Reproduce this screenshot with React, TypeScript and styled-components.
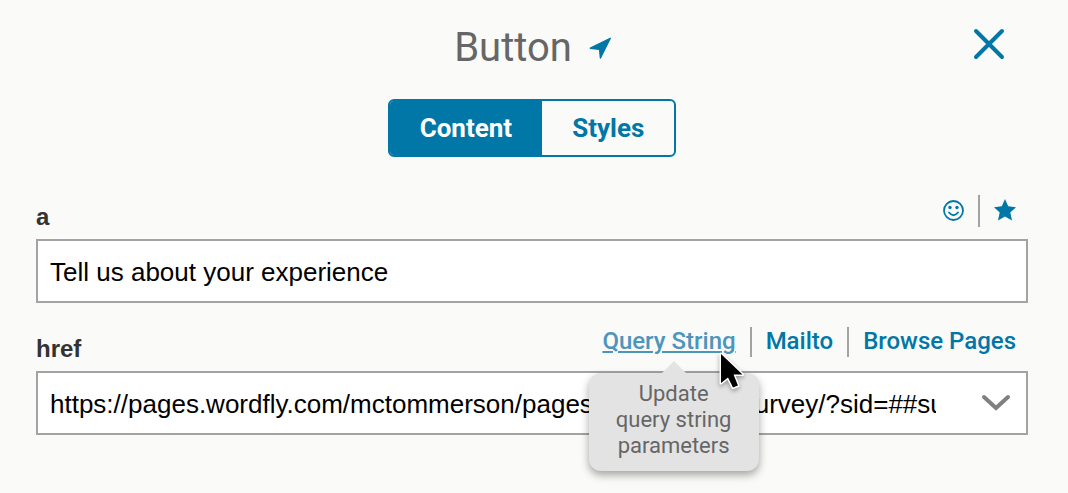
import React from "react";
import styled, { createGlobalStyle } from "styled-components";

const blue = "#0077a6";
const grey = "#a3a3a3";

const GlobalStyle = createGlobalStyle`
  *, *::before, *::after { box-sizing: border-box; }
  body { margin: 0; background: #fafaf8; font-family: Roboto, "Liberation Sans", sans-serif; }
  svg { display: block; }
`;

const Panel = styled.main`
  padding: 20px 40px 56px 36px;
`;

const Header = styled.header`
  display: grid;
  grid-template-columns: 1fr auto 1fr;
  align-items: center;
  height: 56px;
`;

const Heading = styled.div`
  grid-column: 2;
  display: flex;
  align-items: center;
  gap: 16px;
  padding-left: 2px;
`;

const Title = styled.h1`
  margin: 0;
  font-size: 40px;
  line-height: 48px;
  font-weight: 400;
  color: #666;
`;

const IconButton = styled.button`
  display: block;
  padding: 0;
  border: 0;
  background: none;
  color: ${blue};
  cursor: pointer;
`;

const CloseButton = styled(IconButton)`
  justify-self: end;
  align-self: start;
  margin: 8px 23px 0 0;
`;

const Tabs = styled.div`
  display: flex;
  width: fit-content;
  margin: 23px auto 38px;
  border: 2px solid ${blue};
  border-radius: 6px;
  overflow: hidden;
`;

const Tab = styled.button<{ $active?: boolean }>`
  height: 54px;
  padding: 0 30px;
  border: 0;
  font: 700 26px/32px Roboto, sans-serif;
  color: ${(p) => (p.$active ? "#fff" : blue)};
  background: ${(p) => (p.$active ? blue : "transparent")};
  cursor: pointer;
`;

const Field = styled.div`
  margin-bottom: 24px;
`;

const FieldHead = styled.div`
  display: flex;
  justify-content: space-between;
  align-items: flex-end;
  height: 32px;
  margin-bottom: 12px;
  padding-right: 12px;
`;

const Label = styled.label`
  font: 700 24px/20px "Liberation Sans", Arial, sans-serif;
  color: #333;
`;

const Actions = styled.div`
  display: flex;
  align-self: flex-start;
`;

const Action = styled.div<{ $tall?: boolean }>`
  position: relative;
  display: flex;
  align-items: ${(p) => (p.$tall ? "center" : "flex-start")};
  height: ${(p) => (p.$tall ? 32 : 30)}px;
  padding: 0 14px ${(p) => (p.$tall ? 2 : 0)}px;
  & + & { border-left: 2px solid ${grey}; }
  &:last-child { padding-right: 0; }
`;

const ActionLink = styled.a<{ $hover?: boolean }>`
  font-size: 24px;
  line-height: 28px;
  font-weight: 500;
  color: ${(p) => (p.$hover ? "#4c95bc" : blue)};
  text-decoration: ${(p) => (p.$hover ? "underline" : "none")};
  text-decoration-thickness: 2px;
  text-underline-offset: 2px;
  text-decoration-skip-ink: ${(p) => (p.$hover ? "auto" : "none")};
`;

const Tooltip = styled.div`
  position: absolute;
  z-index: 1;
  top: 46px;
  right: -9px;
  width: 170px;
  padding: 8px 24px 12px;
  border-radius: 12px;
  background: #e3e3e3;
  box-shadow: 0 4px 8px rgba(0, 0, 0, 0.35);
  font-size: 22px;
  line-height: 26px;
  text-align: center;
  color: #666;

  &::before {
    content: "";
    position: absolute;
    left: 73px;
    bottom: 100%;
    border: 12px solid transparent;
    border-top-width: 0;
    border-bottom-color: #e3e3e3;
  }
`;

const Pointer = styled.svg`
  position: absolute;
  z-index: 2;
  top: 22px;
  right: 4px;
  filter: drop-shadow(0 2px 2px rgba(0, 0, 0, 0.35));
`;

const Control = styled.div`
  display: flex;
  height: 64px;
  border: 2px solid ${grey};
  background: #fff;
`;

const TextInput = styled.input`
  flex: 1;
  min-width: 0;
  padding: 2px 12px 0;
  border: 0;
  outline: 0;
  background: none;
  font: 400 26px/32px "Liberation Sans", Arial, sans-serif;
  color: #000;
`;

const ArrowButton = styled(IconButton)`
  width: 78px;
  padding-left: 33px;
  color: #808080;
`;

export default function App() {
  return (
    <>
      <GlobalStyle />
      <Panel>
        <Header>
          <Heading>
            <Title>Button</Title>
            <IconButton aria-label="Go to element">
              <svg width="24" height="24" viewBox="0 0 24 24" fill="currentColor">
                <path d="M22.3 2.3 L12.4 22 L11.6 13.4 L2.3 12.2 Z" stroke="currentColor" strokeWidth="1.4" strokeLinejoin="round" />
              </svg>
            </IconButton>
          </Heading>
          <CloseButton aria-label="Close">
            <svg width="32" height="32" viewBox="0 0 32 32" stroke="currentColor" strokeWidth="4" strokeLinecap="round">
              <path d="M3 3 L29 29 M29 3 L3 29" />
            </svg>
          </CloseButton>
        </Header>

        <Tabs role="tablist">
          <Tab role="tab" aria-selected="true" $active>Content</Tab>
          <Tab role="tab" aria-selected="false">Styles</Tab>
        </Tabs>

        <Field>
          <FieldHead>
            <Label htmlFor="text">a</Label>
            <Actions>
              <Action $tall>
                <IconButton aria-label="Insert emoji">
                  <svg width="22" height="22" viewBox="0 0 22 22" fill="none" stroke="currentColor">
                    <circle cx="11.5" cy="11.5" r="9.5" strokeWidth="1.8" />
                    <circle cx="8" cy="8.5" r="1.7" fill="currentColor" stroke="none" />
                    <circle cx="15" cy="8.5" r="1.7" fill="currentColor" stroke="none" />
                    <path d="M7 13.5 Q11.5 19 16 13.5" strokeWidth="1.8" strokeLinecap="round" />
                  </svg>
                </IconButton>
              </Action>
              <Action $tall>
                <IconButton aria-label="Personalize">
                  <svg width="22" height="22" viewBox="0 0 22 22" fill="currentColor">
                    <path d="M11 0 L14.2 7.3 L22 8.2 L16.3 13.6 L18 21.5 L11 17.6 L4 21.5 L5.7 13.6 L0 8.2 L7.8 7.3 Z" />
                  </svg>
                </IconButton>
              </Action>
            </Actions>
          </FieldHead>
          <Control>
            <TextInput id="text" defaultValue="Tell us about your experience" />
          </Control>
        </Field>

        <Field>
          <FieldHead>
            <Label htmlFor="href">href</Label>
            <Actions>
              <Action>
                <ActionLink href="#query" $hover aria-describedby="query-tip">Query String</ActionLink>
                <Tooltip id="query-tip" role="tooltip">Update query string parameters</Tooltip>
                <Pointer width="30" height="42" viewBox="0 0 30 42" aria-hidden="true">
                  <path
                    d="M5 5 V34 L12 28.5 L17 38.5 L22 36.5 L17.5 25.5 H26.5 Z"
                    fill="#000"
                    stroke="#fff"
                    strokeWidth="3"
                    strokeLinejoin="round"
                    paintOrder="stroke"
                  />
                </Pointer>
              </Action>
              <Action>
                <ActionLink href="#mailto">Mailto</ActionLink>
              </Action>
              <Action>
                <ActionLink href="#browse">Browse Pages</ActionLink>
              </Action>
            </Actions>
          </FieldHead>
          <Control>
            <TextInput
              id="href"
              defaultValue="https://pages.wordfly.com/mctommerson/pages/experience_survey/?sid=##subscriberid##"
            />
            <ArrowButton aria-label="Show options">
              <svg width="30" height="18" viewBox="0 0 30 18" fill="none" stroke="currentColor" strokeWidth="4" strokeLinecap="round">
                <path d="M3 3 L15 14 L27 3" />
              </svg>
            </ArrowButton>
          </Control>
        </Field>
      </Panel>
    </>
  );
}
